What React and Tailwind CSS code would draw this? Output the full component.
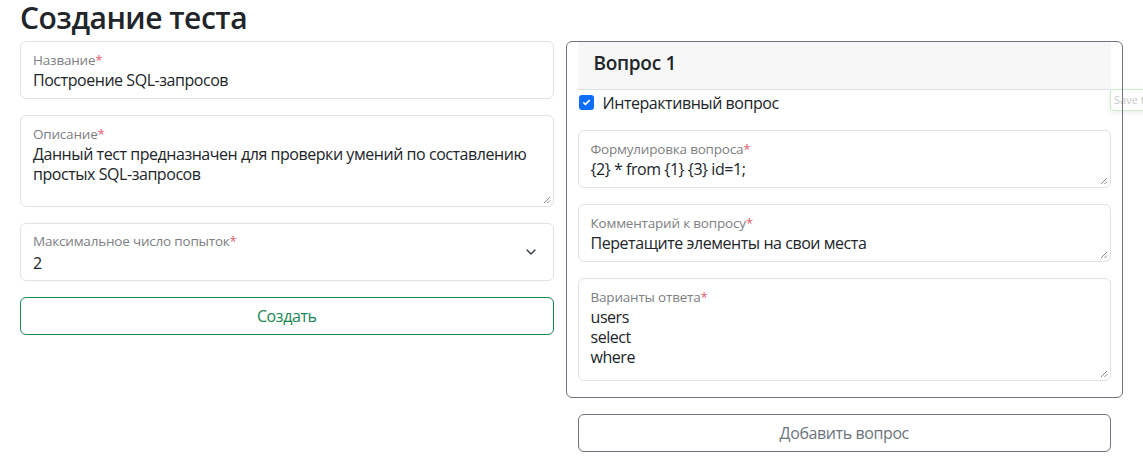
import { ChevronDown } from 'lucide-react';

const font = { fontFamily: '"Open Sans", "Noto Sans", sans-serif' };

function Grip() {
  return (
    <svg className="absolute right-[2px] bottom-[2px]" width="9" height="9" viewBox="0 0 9 9">
      <path d="M8 2 L2 8 M8 5.5 L5.5 8" stroke="#8a8a8a" strokeWidth="1" />
    </svg>
  );
}

function Label({ children }) {
  return (
    <div className="text-[13.5px] leading-5 tracking-[-0.2px] text-[#7d8083]">
      {children}
      <span className="text-[#e4606d]">*</span>
    </div>
  );
}

function Field({ label, lines, height, area }) {
  return (
    <div
      className="relative rounded-md border border-[#dee2e6] bg-white px-3 pt-2"
      style={{ height }}
    >
      <Label>{label}</Label>
      <div className="text-base leading-5 tracking-[-0.45px] text-[#212529]">
        {lines.map((l) => (
          <div key={l}>{l}</div>
        ))}
      </div>
      {area && <Grip />}
    </div>
  );
}

export default function App() {
  return (
    <div className="relative min-h-screen bg-white text-[#212529]" style={font}>
      <h2 className="px-5 pt-[1px] text-[30px] font-semibold leading-[33px] mb-[7px] tracking-[-0.5px]">
        Создание теста
      </h2>

      <div className="absolute left-[1110px] top-[89px] h-[22px] w-[60px] rounded border border-[#cfe8c9] bg-white px-[3px] text-[11px] leading-5 text-[#c9c9c9] shadow-[0_2px_6px_rgba(0,0,0,0.08)]">
        Save t
      </div>

      <div className="flex gap-[12px] px-5">
        <div className="flex w-[534px] flex-col gap-4">
          <Field label="Название" lines={['Построение SQL-запросов']} height={58} />
          <Field
            label="Описание"
            lines={['Данный тест предназначен для проверки умений по составлению', 'простых SQL-запросов']}
            height={92}
            area
          />
          <div className="flex h-[58px] items-center justify-between rounded-md border border-[#dee2e6] px-3">
            <div className="pt-[1px]">
              <Label>Максимальное число попыток</Label>
              <div className="text-base leading-6">2</div>
            </div>
            <ChevronDown className="mr-[2px] h-4 w-4 text-[#343a40]" strokeWidth={2} />
          </div>
          <button className="h-[38px] rounded-md border border-[#198754] text-base tracking-[-0.4px] text-[#198754]">
            Создать
          </button>
        </div>

        <div className="flex w-[558px] flex-col">
          <div className="relative rounded-md border border-[#6c757d] px-[11px] pb-4">
            <div className="flex h-[48px] items-start border-b border-[#dee2e6] bg-[#f7f7f7] px-4 pt-[8px] text-[19px] font-semibold leading-[26px] tracking-[-0.3px]">
              Вопрос 1
            </div>
            <div className="mb-4 flex h-6 items-center gap-[9px] pt-[1px]">
              <span className="ml-[1px] flex h-[15px] w-[15px] items-center justify-center rounded-[3px] bg-[#0d6efd]">
                <svg width="11" height="11" viewBox="0 0 20 20">
                  <path d="M5 10.5 l3 3 l7 -7" fill="none" stroke="white" strokeWidth="3" strokeLinecap="round" strokeLinejoin="round" />
                </svg>
              </span>
              <span className="text-base tracking-[-0.45px]">Интерактивный вопрос</span>
            </div>
            <div className="flex flex-col gap-4">
              <Field label="Формулировка вопроса" lines={['{2} * from {1} {3} id=1;']} height={58} area />
              <Field label="Комментарий к вопросу" lines={['Перетащите элементы на свои места']} height={58} area />
              <Field label="Варианты ответа" lines={['users', 'select', 'where']} height={103} area />
            </div>
          </div>
          <button className="mx-[12px] mt-4 h-[38px] rounded-md border border-[#6c757d] text-base tracking-[-0.4px] text-[#6c757d]">
            Добавить вопрос
          </button>
        </div>
      </div>
    </div>
  );
}
